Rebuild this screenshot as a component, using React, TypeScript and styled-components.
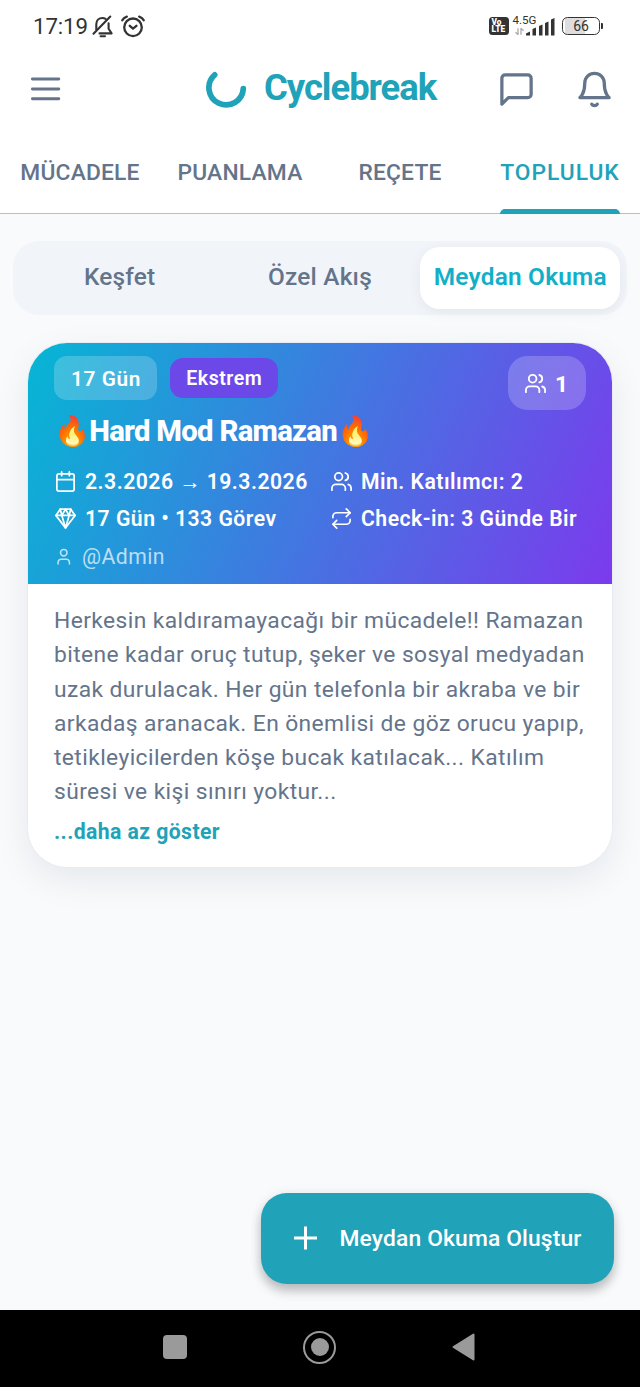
import React from "react";
import styled, { createGlobalStyle } from "styled-components";
import { Calendar, Repeat, User, Users } from "lucide-react";
import { FiBell, FiMessageSquare } from "react-icons/fi";

const teal = "#20a2b8";
const slate = "#64748b";

const GlobalStyle = createGlobalStyle`
  *, *::before, *::after { box-sizing: border-box; }
  body {
    margin: 0;
    background: #f8fafc;
    font-family: Roboto, "Liberation Sans", sans-serif;
  }
  svg { display: block; flex-shrink: 0; }
`;

const Screen = styled.div`
  display: flex;
  flex-direction: column;
  width: 640px;
  height: 1387px;
  overflow: hidden;
  background: #f8fafc;
`;

/* ---------- status bar ---------- */

const StatusBar = styled.div`
  display: flex;
  align-items: center;
  justify-content: space-between;
  height: 52px;
  padding: 0 37px 0 33px;
  background: #fff;
  color: #333;
`;

const StatusGroup = styled.div`
  display: flex;
  align-items: center;
`;

const Clock = styled.span`
  font-size: 22.3px;
  line-height: 26px;
  letter-spacing: -0.15px;
  margin-right: 4.5px;
`;

const VolteBadge = styled.div`
  display: flex;
  flex-direction: column;
  justify-content: center;
  align-items: flex-start;
  width: 20px;
  height: 18px;
  padding-left: 2.5px;
  border-radius: 3.5px;
  background: #333;
  color: #fff;
  font-size: 8.3px;
  font-weight: 900;
  line-height: 7.5px;
`;

const Network = styled.div`
  display: flex;
  align-items: flex-end;
  height: 20px;
  margin: -1px 7px 0 3.5px;
`;

const NetworkType = styled.div`
  display: flex;
  flex-direction: column;
  width: 13.5px;
  height: 21px;
  white-space: nowrap;
  font-size: 11.6px;
  line-height: 10px;
`;

const Arrows = styled.svg`
  margin: 3px 0 0 2px;
`;

const Battery = styled.div`
  display: flex;
  align-items: center;
`;

const BatteryShell = styled.div`
  display: flex;
  align-items: center;
  justify-content: center;
  width: 38px;
  height: 18px;
  border: 1.8px solid #333;
  border-radius: 5.5px;
  background: linear-gradient(90deg, #fff 2px, #dedede 2px, #dedede 60%, #fff 60%);
  font-size: 14px;
  line-height: 15px;
`;

const BatteryCap = styled.div`
  width: 2px;
  height: 6px;
  margin-left: 1px;
  border-radius: 0 1px 1px 0;
  background: #333;
`;

/* ---------- app header ---------- */

const Header = styled.header`
  display: flex;
  align-items: center;
  height: 74px;
  padding: 0 26px 0 30px;
  background: #fff;
  color: ${slate};
`;

const Brand = styled.div`
  display: flex;
  align-items: center;
  gap: 17px;
  margin-left: 144px;
  color: ${teal};
`;

const BrandName = styled.h1`
  margin: -2px 0 0;
  font-size: 36.4px;
  font-weight: 700;
  line-height: 44px;
  letter-spacing: -1px;
`;

const HeaderActions = styled.div`
  display: flex;
  gap: 39px;
  margin-left: auto;
`;

const Tabs = styled.nav`
  display: grid;
  grid-template-columns: repeat(4, 160px);
  height: 88px;
  background: #fff;
  border-bottom: 1.5px solid #b6bfc9;
`;

const Tab = styled.a<{ $active?: boolean }>`
  display: flex;
  flex-direction: column;
  align-items: center;
  height: 88px;
  padding-top: 33px;
  color: ${(p) => (p.$active ? teal : slate)};
  font-size: 22.8px;
  font-weight: 500;
  line-height: 27px;
  letter-spacing: ${(p) => (p.$active ? 0.95 : 0.2)}px;
`;

const TabIndicator = styled.span`
  width: 120px;
  height: 5px;
  margin-top: auto;
  border-radius: 5px 5px 0 0;
  background: ${teal};
`;

/* ---------- content ---------- */

const Content = styled.main`
  display: flex;
  flex-direction: column;
  flex: 1;
  padding: 27px 13px 26px;
`;

const Segmented = styled.div`
  display: grid;
  grid-template-columns: repeat(3, 1fr);
  height: 74px;
  padding: 6px 6.5px;
  border-radius: 26px;
  background: #f1f5f9;
`;

const Segment = styled.button<{ $active?: boolean }>`
  display: flex;
  align-items: center;
  justify-content: center;
  padding: 0 0 3px;
  border: 0;
  border-radius: 20px;
  background: ${(p) => (p.$active ? "#fff" : "transparent")};
  box-shadow: ${(p) => (p.$active ? "0 3px 14px rgba(15, 23, 42, 0.06)" : "none")};
  color: ${(p) => (p.$active ? "#12afc9" : slate)};
  font-family: inherit;
  font-size: 24.4px;
  font-weight: ${(p) => (p.$active ? 600 : 500)};
  letter-spacing: 0.22px;
  white-space: nowrap;
`;

const Card = styled.article`
  margin: 28px 15px 0;
  border-radius: 39px;
  background: #fff;
  box-shadow: 0 0 0 1px #e9edf3, 0 12px 36px rgba(15, 23, 42, 0.08);
`;

const CardHeader = styled.div`
  height: 241px;
  padding: 13px 26px 0;
  border-radius: 39px 39px 0 0;
  background: linear-gradient(112.4deg, #06b6d4 0%, #7c3aed 100%);
  color: #fff;
`;

const ChipRow = styled.div`
  display: flex;
  align-items: flex-start;
  justify-content: space-between;
  height: 54px;
`;

const Chips = styled.div`
  display: flex;
  align-items: center;
  gap: 13px;
`;

const DayChip = styled.span`
  width: 102.5px;
  height: 44px;
  padding-left: 1.5px;
  border-radius: 13px;
  background: rgba(255, 255, 255, 0.2);
  font-size: 20.8px;
  font-weight: 600;
  line-height: 46px;
  letter-spacing: 0.6px;
  text-align: center;
`;

const LevelChip = styled.span`
  width: 108px;
  height: 40.5px;
  padding-left: 1.5px;
  border-radius: 13px;
  background: #6d48e9;
  font-size: 19.55px;
  font-weight: 600;
  line-height: 42px;
  letter-spacing: 0.5px;
  text-align: center;
`;

const Participants = styled.div`
  display: flex;
  align-items: center;
  gap: 8px;
  width: 78px;
  height: 54px;
  padding-left: 16px;
  border-radius: 19.5px;
  background: rgba(255, 255, 255, 0.2);
  font-size: 22.8px;
  font-weight: 700;
`;

const ParticipantCount = styled.span`
  padding-top: 3px;
  line-height: 26px;
`;

const CardTitle = styled.h2`
  height: 36px;
  margin: 3px 0 0;
  font-size: 29.3px;
  font-weight: 800;
  line-height: 36px;
  letter-spacing: -0.72px;
  white-space: nowrap;
`;

const MetaGrid = styled.div`
  display: grid;
  grid-template-columns: 276px 1fr;
  row-gap: 12.4px;
  margin-top: 20px;
`;

const Meta = styled.div`
  display: flex;
  align-items: center;
  gap: 8.5px;
  height: 25px;
  font-size: 21.2px;
  font-weight: 600;
  line-height: 25px;
  letter-spacing: 0.48px;
  white-space: nowrap;

  svg { margin-left: -0.5px; }
`;

const Author = styled(Meta)`
  gap: 9px;
  margin-top: 12.4px;
  font-weight: 400;
  letter-spacing: 0.45px;
  color: rgba(255, 255, 255, 0.7);
`;

const CardBody = styled.div`
  padding: 20px 24px 22.5px 26px;
`;

const Description = styled.p`
  margin: 0;
  color: ${slate};
  font-size: 22.8px;
  line-height: 34.25px;
  letter-spacing: 0.41px;
`;

const ShowLess = styled.a`
  display: block;
  margin-top: 9px;
  color: ${teal};
  font-size: 21.2px;
  font-weight: 700;
  line-height: 26px;
  letter-spacing: 0.42px;
`;

const CreateButton = styled.button`
  display: flex;
  align-items: center;
  align-self: flex-end;
  gap: 21.5px;
  width: 353px;
  height: 91.5px;
  margin: auto 13px 0 0;
  padding: 0 0 0 33px;
  border: 0;
  border-radius: 26px;
  background: #20a2b9;
  box-shadow: 0 7px 11px rgba(0, 0, 0, 0.24), 0 1px 14px rgba(0, 0, 0, 0.06);
  color: #fff;
  font-family: inherit;
  font-size: 22.8px;
  font-weight: 500;
  letter-spacing: 0.16px;
  white-space: nowrap;
`;

/* ---------- system navigation ---------- */

const SystemNav = styled.div`
  display: flex;
  align-items: center;
  justify-content: space-between;
  height: 77px;
  padding: 0 165px 3px 163px;
  background: #000;
  color: #9a9a9a;
`;

const SquareKey = styled.div`
  width: 24px;
  height: 24px;
  border-radius: 4px;
  background: currentColor;
`;

const HomeKey = styled.div`
  display: flex;
  align-items: center;
  justify-content: center;
  width: 33px;
  height: 33px;
  border: 2.5px solid currentColor;
  border-radius: 50%;

  &::after {
    content: "";
    width: 18px;
    height: 18px;
    border-radius: 50%;
    background: currentColor;
  }
`;

const MutedBellIcon = () => (
  <svg width="22" height="23" viewBox="0 0 22 23" fill="none" stroke="#333" strokeWidth="2.1" strokeLinecap="round" strokeLinejoin="round">
    <path d="M4.3 14.6V9.2c0-3.6 2.4-6.2 6.2-6.2 1.2 0 2.2.3 3.1.8" />
    <path d="M16.6 8.2v5.6l3 4.6H7.5" />
    <path d="M8.6 21.3H13M1.5 18.7 18.3 1.5" />
  </svg>
);

const AlarmIcon = () => (
  <svg width="24" height="23" viewBox="0 0 24 23" fill="none" stroke="#333" strokeWidth="2.3" strokeLinecap="round" strokeLinejoin="round" style={{ marginLeft: 6.5 }}>
    <circle cx="12" cy="12.300" r="8.800" />
    <path d="m8.800 10.800 3.200 2.800 3.400-2.800M1.300 5.300Q2.500 2.700 5.800 1.700M22.700 5.300Q21.500 2.700 18.200 1.700" />
  </svg>
);

const SignalIcon = () => (
  <svg width="29" height="20" viewBox="0 0 29 20" fill="#333">
    <path d="M0 19.500v-2l4-2v4zM6.500 19.500v-6.500l3.500-1.500v8zM13 19.500V10l3.500-1.500v11zM19 19.500V7l3.500-1.500v14zM25 19.500V3.500L28.500 2v17.500z" />
  </svg>
);

const MenuIcon = () => (
  <svg width="32" height="26" viewBox="0 0 32 26" fill="none" stroke={slate} strokeWidth="2.900" strokeLinecap="round">
    <path d="M2.400 3h26.400M2.400 13h26.400M2.400 22.800h26.400" />
  </svg>
);

const LogoIcon = () => (
  <svg width="41" height="40" viewBox="0 0 41 40" fill="none" stroke={teal} strokeWidth="5.700" strokeLinecap="round">
    <path d="M8.700 5.800A17.200 17.200 0 1 0 37.300 19.500" />
  </svg>
);

const GemIcon = () => (
  <svg width="23" height="23" viewBox="0 0 24 24" fill="none" stroke="currentColor" strokeWidth="1.800" strokeLinecap="round" strokeLinejoin="round">
    <path d="M6.500 2.300h11L22 8.800 12 21.800 2 8.800z" />
    <path d="M2 8.800h20M6.500 2.300l1.700 6.500L12 2.300l3.800 6.500 1.700-6.500M8.200 8.800 12 21.800l3.800-13" />
  </svg>
);

const PlusIcon = () => (
  <svg width="24" height="24" viewBox="0 0 24 24" fill="none" stroke="#fff" strokeWidth="3">
    <path d="M11.500 .5v23M0 12h23" />
  </svg>
);

const BackIcon = () => (
  <svg width="23" height="28" viewBox="0 0 23 28" fill="#9a9a9a" stroke="#9a9a9a" strokeWidth="2" strokeLinejoin="round">
    <path d="M21.500 1.500v25L1.500 14z" />
  </svg>
);

export default function App() {
  return (
    <Screen>
      <GlobalStyle />
      <StatusBar>
        <StatusGroup>
          <Clock>17:19</Clock>
          <MutedBellIcon />
          <AlarmIcon />
        </StatusGroup>
        <StatusGroup>
          <VolteBadge>
            <span>Vo</span>
            <span>LTE</span>
          </VolteBadge>
          <Network>
            <NetworkType>
              4.5G
              <Arrows width="9" height="7" viewBox="0 0 9 7" fill="none" stroke="#aaa" strokeWidth="1.300">
                <path d="M3 .3v6.400L.5 4.300M6 6.700V.3l2.500 2.400" />
              </Arrows>
            </NetworkType>
            <SignalIcon />
          </Network>
          <Battery>
            <BatteryShell>66</BatteryShell>
            <BatteryCap />
          </Battery>
        </StatusGroup>
      </StatusBar>

      <Header>
        <MenuIcon />
        <Brand>
          <LogoIcon />
          <BrandName>Cyclebreak</BrandName>
        </Brand>
        <HeaderActions>
          <FiMessageSquare size={39} />
          <FiBell size={39} />
        </HeaderActions>
      </Header>

      <Tabs>
        <Tab>MÜCADELE</Tab>
        <Tab>PUANLAMA</Tab>
        <Tab>REÇETE</Tab>
        <Tab $active>
          TOPLULUK
          <TabIndicator />
        </Tab>
      </Tabs>

      <Content>
        <Segmented>
          <Segment>Keşfet</Segment>
          <Segment>Özel Akış</Segment>
          <Segment $active>Meydan Okuma</Segment>
        </Segmented>

        <Card>
          <CardHeader>
            <ChipRow>
              <Chips>
                <DayChip>17 Gün</DayChip>
                <LevelChip>Ekstrem</LevelChip>
              </Chips>
              <Participants>
                <Users size={23} strokeWidth={1.9} />
                <ParticipantCount>1</ParticipantCount>
              </Participants>
            </ChipRow>
            <CardTitle>🔥Hard Mod Ramazan🔥</CardTitle>
            <MetaGrid>
              <Meta>
                <Calendar size={23} strokeWidth={1.8} />
                2.3.2026 → 19.3.2026
              </Meta>
              <Meta>
                <Users size={23} strokeWidth={1.8} />
                Min. Katılımcı: 2
              </Meta>
              <Meta>
                <GemIcon />
                17 Gün • 133 Görev
              </Meta>
              <Meta>
                <Repeat size={23} strokeWidth={1.8} />
                Check-in: 3 Günde Bir
              </Meta>
            </MetaGrid>
            <Author>
              <User size={19.5} strokeWidth={1.9} />
              @Admin
            </Author>
          </CardHeader>
          <CardBody>
            <Description>
              Herkesin kaldıramayacağı bir mücadele!! Ramazan bitene kadar oruç tutup, şeker ve sosyal
              medyadan uzak durulacak. Her gün telefonla bir akraba ve bir arkadaş aranacak. En önemlisi de
              göz orucu yapıp, tetikleyicilerden köşe bucak katılacak... Katılım süresi ve kişi sınırı
              yoktur...
            </Description>
            <ShowLess>...daha az göster</ShowLess>
          </CardBody>
        </Card>

        <CreateButton>
          <PlusIcon />
          Meydan Okuma Oluştur
        </CreateButton>
      </Content>

      <SystemNav>
        <SquareKey />
        <HomeKey />
        <BackIcon />
      </SystemNav>
    </Screen>
  );
}
